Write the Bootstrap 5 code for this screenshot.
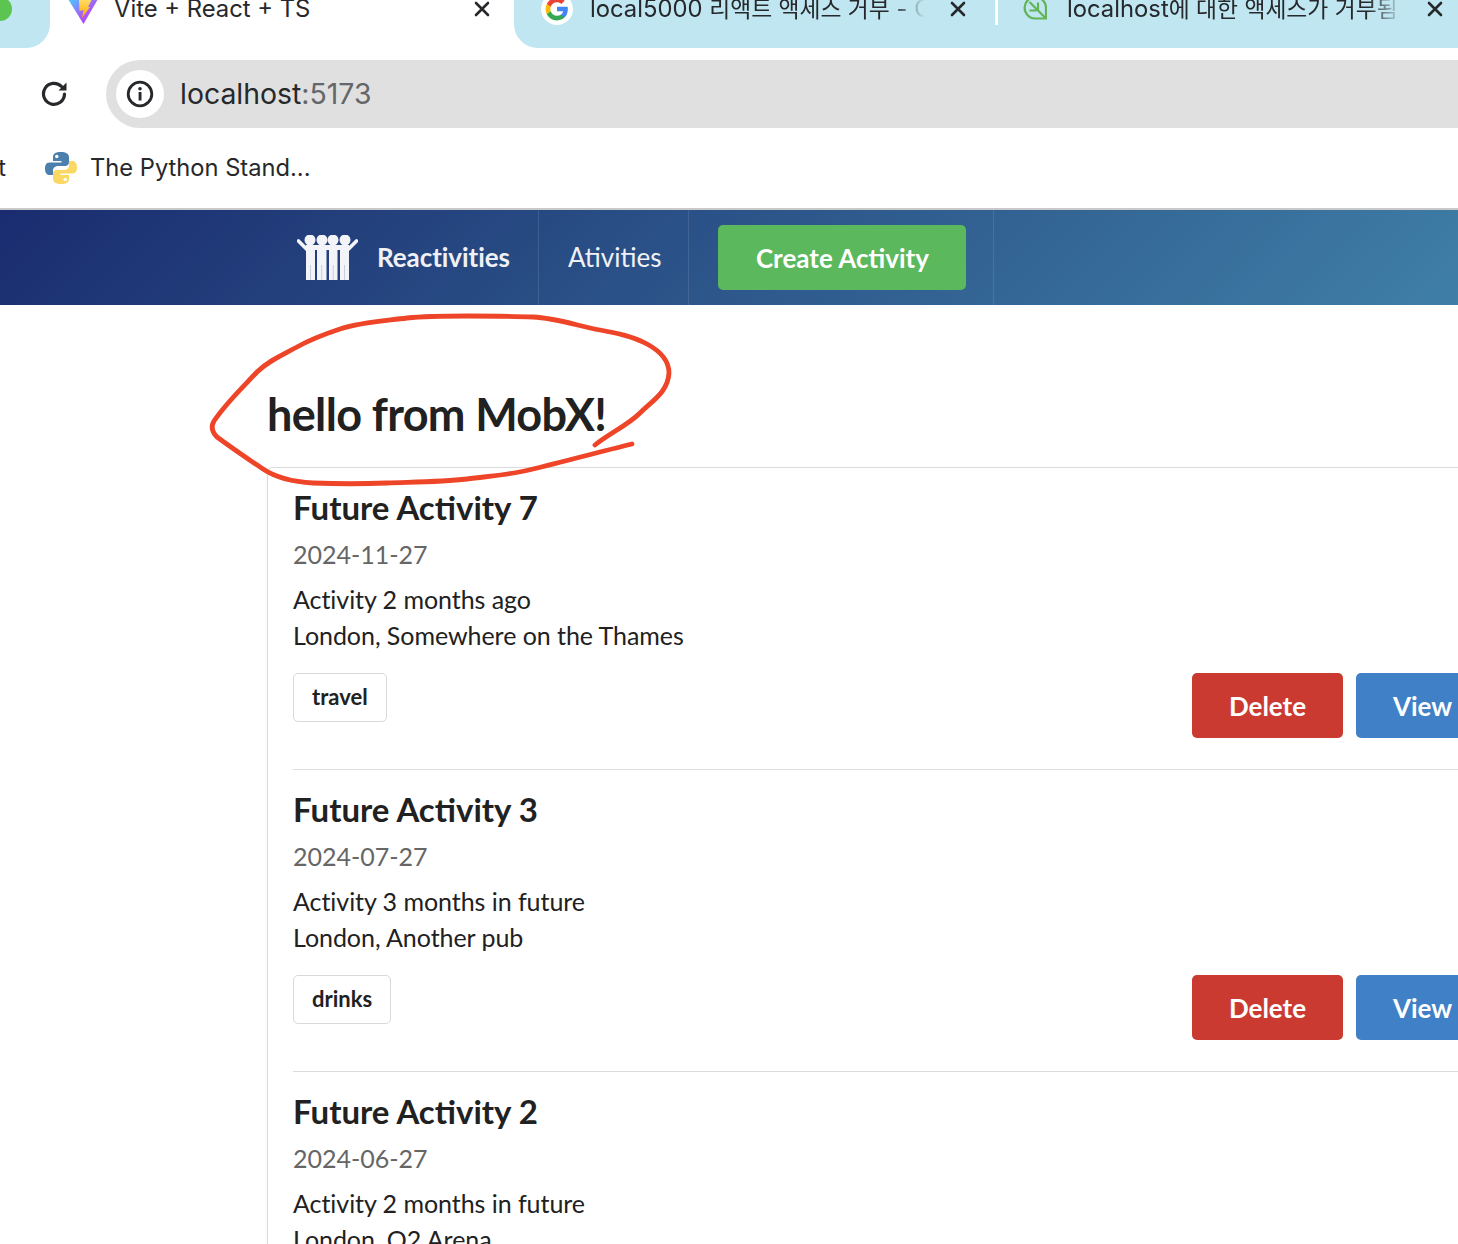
<!DOCTYPE html>
<html lang="en">
<head>
    <meta charset="UTF-8">
    <meta name="viewport" content="width=device-width, initial-scale=1">
    <link href="https://cdn.jsdelivr.net/npm/bootstrap@5.3.3/dist/css/bootstrap.min.css" rel="stylesheet">
    <script src="https://cdn.jsdelivr.net/npm/bootstrap@5.3.3/dist/js/bootstrap.bundle.min.js"></script>
    <title>Reactivities</title>
    <style>
        html, body { height: 100%; overflow: hidden; }
        body { position: relative; font-family: "Lato", "Noto Sans", sans-serif; color: #212121; background: #fff; }
        .chrome-txt { font-family: "Inter", "Noto Sans CJK KR", sans-serif; color: #26282b; white-space: nowrap; }
        .ko { font-size: 22.8px; }

        .tab-strip { height: 48px; overflow: hidden; }
        .tab-stub { width: 50px; background: #bfe6f1; border-bottom-right-radius: 24px; }
        .tab-active { width: 464px; background: #fff; }
        .tab-rest { flex: 1; background: #bfe6f1; border-bottom-left-radius: 24px; }
        .tab-inner { margin-top: -6px; height: 30px; font-size: 23.8px; line-height: 30px; }
        .tab-fade { overflow: hidden; flex-shrink: 0; margin-top: -1px; -webkit-mask-image: linear-gradient(to right, #000 90%, transparent 100%); mask-image: linear-gradient(to right, #000 90%, transparent 100%); }
        .tab-sep { width: 3px; height: 25px; background: #fff; margin-left: 29px; margin-top: 6px; flex-shrink: 0; }
        .stub-dot { width: 24px; height: 24px; border-radius: 50%; background: #5cc552; margin-left: -12px; margin-top: -3px; }
        .tab-x { flex-shrink: 0; }
        .vite-ico { margin-left: 17px; flex-shrink: 0; }
        .vite-name { margin-left: 15px; margin-top: -1px; }
        .x-one { margin-left: 164px; }
        .g-ico { width: 32px; height: 32px; margin-left: 27px; flex-shrink: 0; background: #fff; border-radius: 50%; }
        .g-name { width: 335px; margin-left: 17px; }
        .x-two { margin-left: 25px; }
        .leaf-ico { margin-left: 25px; flex-shrink: 0; }
        .leaf-name { width: 335px; margin-left: 20px; }

        .addr-row { height: 92px; padding-top: 12px; padding-bottom: 12px; }
        .reload-ico { margin-left: 41px; flex-shrink: 0; }
        .addr-pill { margin-left: 37px; flex: 1; margin-right: -60px; height: 68px; border-radius: 34px; background: #e0e0e0; padding-left: 10px; }
        .addr-info { width: 48px; height: 48px; background: #fff; border-radius: 50%; }
        .addr-txt { font-size: 28.4px; margin-left: 16px; }
        .addr-txt span { color: #63666a; }

        .mark-row { height: 70px; font-size: 23.7px; padding-bottom: 12px; border-bottom: 2px solid #c9c9c9; }
        .mark-cut { margin-left: -8px; width: 14px; overflow: hidden; display: inline-block; text-align: right; }
        .py-ico { margin-left: 38px; flex-shrink: 0; }
        .py-name { margin-left: 12px; }

        .app-bar { height: 95px; background: linear-gradient(135deg, #1a2c6f 0%, #3f7fa6 100%); padding-left: 270px; }
        .bar-item { height: 95px; padding: 0 30px 0 27px; color: #f0f1f5; font-size: 26px; border-right: 1px solid rgba(255,255,255,.1); }
        .bar-brand { font-weight: 700; gap: 19px; padding-right: 28px; letter-spacing: -.06px; }
        .bar-plain { padding-left: 29px; padding-right: 27px; font-weight: 400; }
        .bar-btnwrap { padding-left: 29px; padding-right: 27px; }
        .btn-create { width: 248px; height: 65px; padding: 1px 0 0; background: #5cb85c; border: 0; border-radius: 5px; color: #fff; font-size: 26px; font-weight: 700; }

        .page-title { font-size: 45px; line-height: 56px; font-weight: 700; letter-spacing: -.65px; margin: 81px 0 25px 267px; color: #212121; }
        .activity-box { margin-left: 267px; width: 1248px; padding: 0 25px; border: 1px solid #dcdcdc; border-radius: 5px; box-shadow: 0 1px 2px rgba(0,0,0,.1); }
        .activity-row { padding: 19px 0 31px; border-top: 1px solid #dcdcdc; }
        .activity-row:first-child { border-top: 0; }
        .act-title { font-size: 33px; line-height: 40px; font-weight: 700; margin: 0; color: #212121; }
        .act-date { font-size: 25px; line-height: 36px; margin-top: 9px; color: #666; }
        .act-desc { font-size: 25px; line-height: 36px; letter-spacing: -.05px; margin-top: 9px; color: #212121; }
        .act-foot { margin-top: 20px; }
        .act-tag { height: 49px; padding: 0 18px; font-size: 22px; font-weight: 700; line-height: 45px; border: 1px solid #d9d9d9; border-radius: 5px; color: #212121; background: #fff; }
        .act-btn { height: 65px; border: 0; border-radius: 5px; color: #fff; font-size: 26px; font-weight: 700; padding: 1px 0 0; }
        .btn-del { width: 151px; background: #cb3a31; }
        .btn-view { width: 133px; margin-left: 13px; background: #4080c6; }

        .scribble { position: absolute; left: 0; top: 0; pointer-events: none; }
    </style>
</head>
<body>

<!-- browser tabs -->
<div class="tab-strip d-flex">
    <div class="tab-stub"><div class="stub-dot"></div></div>
    <div class="tab-active">
        <div class="tab-inner chrome-txt d-flex align-items-center">
            <svg class="vite-ico" width="32" height="36" viewBox="0 0 32 36">
                <defs>
                    <linearGradient id="vitePurple" x1="0" y1="0" x2="1" y2="1"><stop offset="0" stop-color="#41d1ff"/><stop offset=".55" stop-color="#a95cf5"/><stop offset="1" stop-color="#bd34fe"/></linearGradient>
                    <linearGradient id="viteBolt" x1="0" y1="0" x2="0" y2="1"><stop offset="0" stop-color="#ffdd6a"/><stop offset="1" stop-color="#ffa800"/></linearGradient>
                </defs>
                <path d="M1 8 L31 8 L16.500 33 Z" fill="url(#vitePurple)"/>
                <path d="M12 8 L25 8 L21 16 L23 16 L15 27 L16.500 19 L12.500 20 Z" fill="url(#viteBolt)"/>
            </svg>
            <span class="vite-name">Vite + React + TS</span>
            <svg class="tab-x x-one" width="16" height="16" viewBox="0 0 16 16"><path d="M2 2 L14 14 M14 2 L2 14" stroke="#26282b" stroke-width="2.6" stroke-linecap="round"/></svg>
        </div>
    </div>
    <div class="tab-rest">
        <div class="tab-inner chrome-txt d-flex align-items-center">
            <span class="g-ico d-flex align-items-center justify-content-center">
                <svg width="26" height="26" viewBox="0 0 48 48">
                    <path d="M44 24c0-1.400-.1-2.800-.4-4H24v8h11.300c-.5 2.700-2 5-4.300 6.500v5.400h6.900C41.900 36.200 44 30.600 44 24z" fill="#4285f4"/>
                    <path d="M24 45c5.700 0 10.500-1.900 13.900-5.100L31 34.500c-1.900 1.300-4.300 2-7 2-5.400 0-10-3.600-11.600-8.500H5.300v5.500C8.700 40.300 15.800 45 24 45z" fill="#34a853"/>
                    <path d="M12.400 28c-.4-1.300-.7-2.600-.7-4s.2-2.700.7-4v-5.500H5.300C3.800 17.300 3 20.600 3 24s.8 6.700 2.300 9.500z" fill="#fbbc05"/>
                    <path d="M24 11.500c3.100 0 5.800 1.100 8 3.100l6-6C34.400 5.200 29.700 3 24 3 15.800 3 8.700 7.700 5.300 14.500l7.100 5.500c1.600-4.900 6.200-8.500 11.600-8.500z" fill="#ea4335"/>
                </svg>
            </span>
            <span class="tab-fade g-name">local5000 <span class="ko">리액트 액세스 거부</span> - Google</span>
            <svg class="tab-x x-two" width="16" height="16" viewBox="0 0 16 16"><path d="M2 2 L14 14 M14 2 L2 14" stroke="#26282b" stroke-width="2.6" stroke-linecap="round"/></svg>
            <span class="tab-sep"></span>
            <svg class="leaf-ico" width="24" height="24" viewBox="0 0 24 24" fill="none" stroke="#63b457" stroke-width="2.200">
                <path d="M23 21.500 H12 A10.700 10.700 0 1 1 23 10.800 Z"/>
                <path d="M22 20.500 L6.500 5 M15 13.500 V5.500 M13.500 13.500 H6.500"/>
            </svg>
            <span class="tab-fade leaf-name">localhost<span class="ko">에 대한 액세스가 거부됨</span> (</span>
            <svg class="tab-x x-two" width="16" height="16" viewBox="0 0 16 16"><path d="M2 2 L14 14 M14 2 L2 14" stroke="#26282b" stroke-width="2.6" stroke-linecap="round"/></svg>
        </div>
    </div>
</div>

<!-- address bar -->
<div class="addr-row d-flex align-items-center">
    <svg class="reload-ico" width="28" height="28" viewBox="0 0 28 28" fill="none">
        <path d="M23.500 14 A10.500 10.500 0 1 1 20.500 6.500" stroke="#26282b" stroke-width="3.200" stroke-linecap="round"/>
        <path d="M25.500 2.500 L25.500 10.500 L17.500 10.500 Z" fill="#26282b"/>
    </svg>
    <div class="addr-pill d-flex align-items-center">
        <div class="addr-info d-flex align-items-center justify-content-center flex-shrink-0">
            <svg width="28" height="28" viewBox="0 0 28 28" fill="none">
                <circle cx="14" cy="14" r="11.800" stroke="#26282b" stroke-width="2.800"/>
                <rect x="12.600" y="12" width="2.900" height="8.500" fill="#26282b"/>
                <circle cx="14" cy="8.800" r="1.800" fill="#26282b"/>
            </svg>
        </div>
        <div class="addr-txt chrome-txt">localhost<span>:5173</span></div>
    </div>
</div>

<!-- bookmarks -->
<div class="mark-row chrome-txt d-flex align-items-center">
    <span class="mark-cut">t</span>
    <svg class="py-ico" width="34" height="34" viewBox="0 0 34 34">
        <path d="M16.700 1 C10 1 9 3.500 9 6.500 V10 H17.500 V11.500 H5.500 C2 11.500 1 14.500 1 17.500 C1 21.500 2.500 24 5.500 24 H9 V19.500 C9 16.500 11.500 15 14 15 H21 C23.500 15 25 13.500 25 11 V6 C25 3 22 1 16.700 1 Z" fill="#4b7fae"/>
        <circle cx="12.800" cy="5.500" r="1.700" fill="#fff"/>
        <path d="M17.300 33 C24 33 25 30.500 25 27.500 V24 H16.500 V22.500 H28.500 C32 22.500 33 19.500 33 16.500 C33 12.500 31.500 10 28.500 10 H25 V14.500 C25 17.500 22.500 19 20 19 H13 C10.500 19 9 20.500 9 23 V28 C9 31 12 33 17.300 33 Z" fill="#fbd863"/>
        <circle cx="21.200" cy="28.500" r="1.700" fill="#fff"/>
    </svg>
    <span class="py-name">The Python Stand...</span>
</div>

<!-- app navbar -->
<nav class="app-bar d-flex align-items-center">
    <div class="bar-item bar-brand d-flex align-items-center">
        <svg class="flex-shrink-0" width="61" height="46" viewBox="0 0 61 46" fill="#f3f4f7">
            <circle cx="13" cy="5" r="5.500"/><circle cx="25" cy="5" r="5.500"/><circle cx="36" cy="5" r="5.500"/><circle cx="48" cy="5" r="5.500"/>
            <rect x="9" y="10" width="43" height="5"/>
            <rect x="9" y="12" width="9" height="33"/><rect x="20" y="12" width="9.500" height="33"/><rect x="32" y="12" width="8.500" height="33"/><rect x="43" y="12" width="9" height="33"/>
            <path d="M1.500 6 L10 14.500 M59.500 6 L51 14.500" stroke="#f3f4f7" stroke-width="3.600" stroke-linecap="round"/>
            <path d="M13.500 30 V45 M24.700 30 V45 M36.200 30 V45 M47.500 30 V45" stroke="#b5bed0" stroke-width=".7"/>
        </svg>
        <span>Reactivities</span>
    </div>
    <div class="bar-item bar-plain d-flex align-items-center">Ativities</div>
    <div class="bar-item bar-btnwrap d-flex align-items-center">
        <button class="btn btn-create" type="button">Create Activity</button>
    </div>
</nav>

<h1 class="page-title">hello from MobX!</h1>

<div class="activity-box">
    <div class="activity-row">
        <h2 class="act-title">Future Activity 7</h2>
        <div class="act-date">2024-11-27</div>
        <div class="act-desc">Activity 2 months ago<br>London, Somewhere on the Thames</div>
        <div class="act-foot d-flex justify-content-between align-items-start">
            <span class="act-tag">travel</span>
            <div class="d-flex">
                <button class="btn act-btn btn-del" type="button">Delete</button>
                <button class="btn act-btn btn-view" type="button">View</button>
            </div>
        </div>
    </div>
    <div class="activity-row">
        <h2 class="act-title">Future Activity 3</h2>
        <div class="act-date">2024-07-27</div>
        <div class="act-desc">Activity 3 months in future<br>London, Another pub</div>
        <div class="act-foot d-flex justify-content-between align-items-start">
            <span class="act-tag">drinks</span>
            <div class="d-flex">
                <button class="btn act-btn btn-del" type="button">Delete</button>
                <button class="btn act-btn btn-view" type="button">View</button>
            </div>
        </div>
    </div>
    <div class="activity-row">
        <h2 class="act-title">Future Activity 2</h2>
        <div class="act-date">2024-06-27</div>
        <div class="act-desc">Activity 2 months in future<br>London, O2 Arena</div>
    </div>
</div>

<!-- red marker circle drawn over the heading -->
<svg class="scribble" width="1458" height="1244" viewBox="0 0 1458 1244" fill="none">
    <path d="M595 445 C610 433 628 425 640 413 C652 401 668 392 669 373 C669 360 660 351 647 344 C632 336 616 333 600 330 C578 326 556 318 533 317 C511 316 489 316 467 316 C447 316 427 316 407 318 C384 321 362 322 340 329 C325 334 311 339 297 347 C282 355 268 361 257 372 C242 388 226 403 214 421 C210 428 213 433 217 437 C232 448 248 459 263 469 C278 479 295 482 313 483 C338 484 362 484 387 483 C414 482 441 482 467 479 C489 476 511 475 533 469 C566 461 599 452 632 444" stroke="#ee4428" stroke-width="4.800" stroke-linecap="round" stroke-linejoin="round"/>
</svg>

</body>
</html>
